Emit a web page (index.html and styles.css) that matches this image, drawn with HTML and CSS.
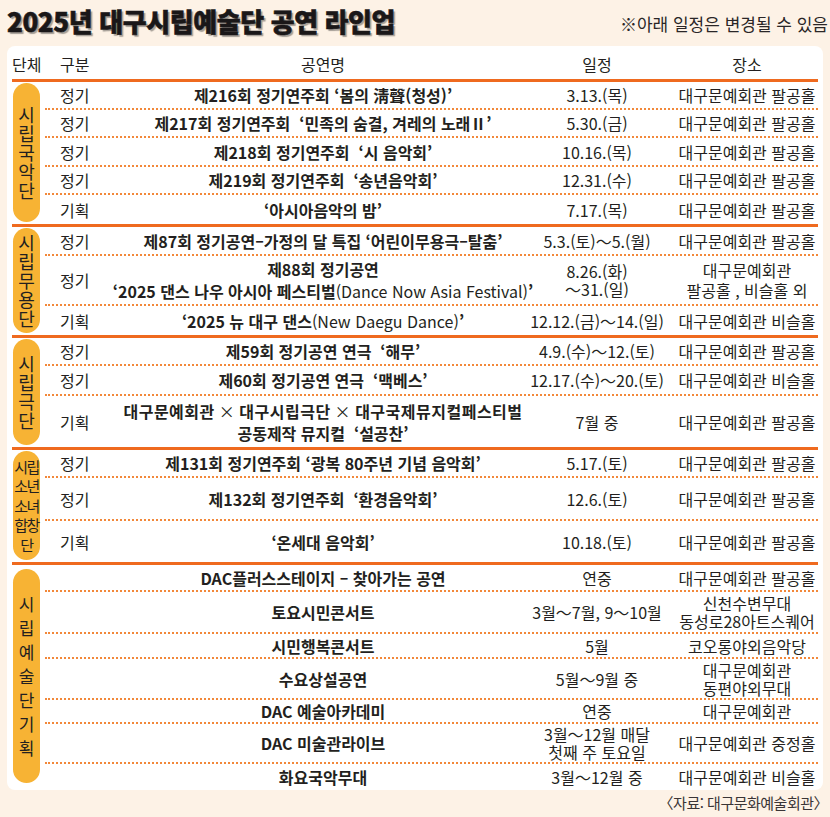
FILE: index.html
```html
<!DOCTYPE html>
<html lang="ko">
<head>
<meta charset="utf-8">
<title>2025년 대구시립예술단 공연 라인업</title>
<link rel="stylesheet" href="styles.css">
</head>
<body>
<div class="page">
  <div class="top">
    <h1 class="title">2025년 대구시립예술단 공연 라인업</h1>
    <p class="note">※아래 일정은 변경될 수 있음</p>
  </div>
  <div class="card">
    <div class="head">
      <div class="h-group">단체</div>
      <div class="h-type">구분</div>
      <div class="h-c">공연명</div>
      <div class="h-c">일정</div>
      <div class="h-c h-place">장소</div>
    </div>

    <div class="group">
      <div class="gcol"><div class="pill"><span class="vt">시립국악단</span></div></div>
      <div class="rows">
        <div class="row h28">
          <div class="type">정기</div>
          <div class="name"><span>제216회 정기연주회 ‘봄의 淸聲(청성)’</span></div>
          <div class="date"><span>3.13.(목)</span></div>
          <div class="place"><span>대구문예회관 팔공홀</span></div>
        </div>
        <div class="row h28">
          <div class="type">정기</div>
          <div class="name"><span>제217회 정기연주회&nbsp; ‘민족의 숨결, 겨레의 노래Ⅱ’</span></div>
          <div class="date"><span>5.30.(금)</span></div>
          <div class="place"><span>대구문예회관 팔공홀</span></div>
        </div>
        <div class="row h29">
          <div class="type">정기</div>
          <div class="name"><span>제218회 정기연주회&nbsp; ‘시 음악회’</span></div>
          <div class="date"><span>10.16.(목)</span></div>
          <div class="place"><span>대구문예회관 팔공홀</span></div>
        </div>
        <div class="row h28">
          <div class="type">정기</div>
          <div class="name"><span>제219회 정기연주회&nbsp; ‘송년음악회’</span></div>
          <div class="date"><span>12.31.(수)</span></div>
          <div class="place"><span>대구문예회관 팔공홀</span></div>
        </div>
        <div class="row h29">
          <div class="type">기획</div>
          <div class="name"><span>‘아시아음악의 밤’</span></div>
          <div class="date"><span>7.17.(목)</span></div>
          <div class="place"><span>대구문예회관 팔공홀</span></div>
        </div>
      </div>
    </div>

    <div class="group">
      <div class="gcol"><div class="pill"><span class="vt">시립무용단</span></div></div>
      <div class="rows">
        <div class="row h29">
          <div class="type">정기</div>
          <div class="name"><span>제87회 정기공연–가정의 달 특집 ‘어린이무용극–탈춤’</span></div>
          <div class="date"><span>5.3.(토)～5.(월)</span></div>
          <div class="place"><span>대구문예회관 팔공홀</span></div>
        </div>
        <div class="row h50">
          <div class="type">정기</div>
          <div class="name two"><span>제88회 정기공연<br>‘2025 댄스 나우 아시아 페스티벌<span class="lt">(Dance Now Asia Festival)</span>’</span></div>
          <div class="date"><span>8.26.(화)<br>～31.(일)</span></div>
          <div class="place lh20"><span>대구문예회관<br>팔공홀 , 비슬홀 외</span></div>
        </div>
        <div class="row h29">
          <div class="type">기획</div>
          <div class="name"><span>‘2025 뉴 대구 댄스<span class="lt">(New Daegu Dance)</span>’</span></div>
          <div class="date"><span>12.12.(금)～14.(일)</span></div>
          <div class="place"><span>대구문예회관 비슬홀</span></div>
        </div>
      </div>
    </div>

    <div class="group">
      <div class="gcol"><div class="pill"><span class="vt">시립극단</span></div></div>
      <div class="rows">
        <div class="row h28">
          <div class="type">정기</div>
          <div class="name"><span>제59회 정기공연 연극&nbsp; ‘해무’</span></div>
          <div class="date"><span>4.9.(수)～12.(토)</span></div>
          <div class="place"><span>대구문예회관 팔공홀</span></div>
        </div>
        <div class="row h30">
          <div class="type">정기</div>
          <div class="name"><span>제60회 정기공연 연극&nbsp; ‘맥베스’</span></div>
          <div class="date"><span>12.17.(수)～20.(토)</span></div>
          <div class="place"><span>대구문예회관 비슬홀</span></div>
        </div>
        <div class="row h51">
          <div class="type">기획</div>
          <div class="name two"><span><span class="wide">대구문예회관<span class="x">×</span>대구시립극단<span class="x">×</span>대구국제뮤지컬페스티벌</span><br>공동제작 뮤지컬&nbsp; ‘설공찬’</span></div>
          <div class="date"><span>7월 중</span></div>
          <div class="place"><span>대구문예회관 팔공홀</span></div>
        </div>
      </div>
    </div>

    <div class="group">
      <div class="gcol"><div class="pill"><span class="vt vt-sm"><span>시립</span><span>소년</span><span>소녀</span><span>합창</span><span>단</span></span></div></div>
      <div class="rows">
        <div class="row h28">
          <div class="type">정기</div>
          <div class="name"><span>제131회 정기연주회 ‘광복 80주년 기념 음악회’</span></div>
          <div class="date"><span>5.17.(토)</span></div>
          <div class="place"><span>대구문예회관 팔공홀</span></div>
        </div>
        <div class="row h43">
          <div class="type">정기</div>
          <div class="name"><span>제132회 정기연주회&nbsp; ‘환경음악회’</span></div>
          <div class="date"><span>12.6.(토)</span></div>
          <div class="place"><span>대구문예회관 팔공홀</span></div>
        </div>
        <div class="row h41">
          <div class="type">기획</div>
          <div class="name"><span>‘온세대 음악회’</span></div>
          <div class="date"><span>10.18.(토)</span></div>
          <div class="place"><span>대구문예회관 팔공홀</span></div>
        </div>
      </div>
    </div>

    <div class="group">
      <div class="gcol"><div class="pill pill-last"><span class="vt vt-lg">시립예술단기획</span></div></div>
      <div class="rows">
        <div class="row h27">
          <div class="type"></div>
          <div class="name"><span>DAC플러스스테이지 – 찾아가는 공연</span></div>
          <div class="date"><span>연중</span></div>
          <div class="place"><span>대구문예회관 팔공홀</span></div>
        </div>
        <div class="row h42">
          <div class="type"></div>
          <div class="name"><span>토요시민콘서트</span></div>
          <div class="date"><span>3월～7월, 9～10월</span></div>
          <div class="place"><span>신천수변무대<br>동성로28아트스퀘어</span></div>
        </div>
        <div class="row h25">
          <div class="type"></div>
          <div class="name"><span>시민행복콘서트</span></div>
          <div class="date"><span>5월</span></div>
          <div class="place"><span>코오롱야외음악당</span></div>
        </div>
        <div class="row h41">
          <div class="type"></div>
          <div class="name"><span>수요상설공연</span></div>
          <div class="date"><span>5월～9월 중</span></div>
          <div class="place"><span>대구문예회관<br>동편야외무대</span></div>
        </div>
        <div class="row h24">
          <div class="type"></div>
          <div class="name"><span>DAC 예술아카데미</span></div>
          <div class="date"><span>연중</span></div>
          <div class="place"><span>대구문예회관</span></div>
        </div>
        <div class="row h40">
          <div class="type"></div>
          <div class="name"><span>DAC 미술관라이브</span></div>
          <div class="date"><span>3월～12월 매달<br>첫째 주 토요일</span></div>
          <div class="place"><span>대구문예회관 중정홀</span></div>
        </div>
        <div class="row h26">
          <div class="type"></div>
          <div class="name"><span>화요국악무대</span></div>
          <div class="date"><span>3월～12월 중</span></div>
          <div class="place"><span>대구문예회관 비슬홀</span></div>
        </div>
      </div>
    </div>
  </div>
  <p class="source">〈자료: 대구문화예술회관〉</p>
</div>
</body>
</html>
```

FILE: styles.css
```css
* { box-sizing: border-box; }

html, body {
  margin: 0;
  padding: 0;
}

body {
  background: #fdf2e6;
  font-family: "Noto Sans CJK KR", "Noto Sans", sans-serif;
  color: #231f20;
  font-size: 16px;
}

.page {
  width: 830px;
  padding: 0 2px 0 7px;
}

.top {
  display: flex;
  justify-content: space-between;
  align-items: flex-end;
  height: 36px;
  padding-top: 5px;
}

.title {
  margin: 0;
  font-size: 26px;
  line-height: 31px;
  font-weight: 900;
  letter-spacing: -0.4px;
  color: #1a1718;
  -webkit-text-stroke: 0.6px #1a1718;
  text-shadow: 2px 2px 1px rgba(0, 0, 0, 0.35);
}

.note {
  margin: 0 0 2px;
  font-size: 17px;
  line-height: 20px;
  color: #2a2627;
}

.card {
  margin: 10px 5px 0 0;
  background: #fff;
  border-radius: 8px;
  padding: 0 5px;
}

.head {
  display: grid;
  grid-template-columns: 33px 55px 446px 102px 1fr;
  height: 36px;
  border-bottom: 3px solid #ef6a1f;
  padding-top: 7px;
  font-size: 16px;
  line-height: 22px;
  color: #231f20;
}

.h-type { padding-left: 15px; }
.h-c { text-align: center; }
.h-place { padding-left: 28px; }

.group {
  display: flex;
  border-bottom: 3px solid #ef6a1f;
}

.group:last-child { border-bottom: 0; }

.gcol {
  width: 33px;
  flex: none;
  display: flex;
  padding: 1px 0 2px 1px;
}

.pill {
  width: 27px;
  background: #f7b334;
  border-radius: 14px;
  display: flex;
  flex-direction: column;
  justify-content: center;
  align-items: center;
}

.pill-last { margin: 3px 0 5px; }

.vt {
  display: block;
  width: 27px;
  text-align: center;
  font-size: 18px;
  line-height: 19px;
  word-break: break-all;
  color: #231f20;
}

.vt-lg {
  font-size: 17px;
  line-height: 24px;
}

.vt-sm {
  font-size: 15px;
  line-height: 19.5px;
  letter-spacing: -1.5px;
  word-break: keep-all;
}

.vt-sm span {
  display: block;
  white-space: nowrap;
}

.rows { flex: 1; }

.row {
  display: grid;
  grid-template-columns: 55px 446px 102px 1fr;
  align-items: center;
  border-bottom: 2px dotted #f2883a;
  font-size: 16px;
  line-height: 20px;
}

.row:last-child { border-bottom: 0; }

.h24 { height: 24px; }
.h25 { height: 25px; }
.h26 { height: 26px; }
.h27 { height: 27px; }
.h28 { height: 28px; }
.h29 { height: 29px; }
.h30 { height: 30px; }
.h40 { height: 40px; }
.h41 { height: 41px; }
.h42 { height: 42px; }
.h43 { height: 43px; }
.h50 { height: 50px; }
.h51 { height: 51px; }

.type {
  padding-left: 15px;
  color: #231f20;
}

.name,
.date,
.place {
  display: flex;
  justify-content: center;
  text-align: center;
  white-space: nowrap;
}

.name { font-weight: 700; }
.name.two { line-height: 22px; }

.lt { font-weight: 400; }
.wide { letter-spacing: 0.5px; }
.x { margin: 0 4px; font-weight: 400; }

.date { line-height: 18px; }

.place {
  padding-left: 28px;
  line-height: 18px;
}

.place.lh20 { line-height: 20px; }

.source {
  margin: 3px 0 0;
  text-align: right;
  font-size: 15px;
  line-height: 20px;
  letter-spacing: -0.5px;
  color: #3a3536;
}
```
